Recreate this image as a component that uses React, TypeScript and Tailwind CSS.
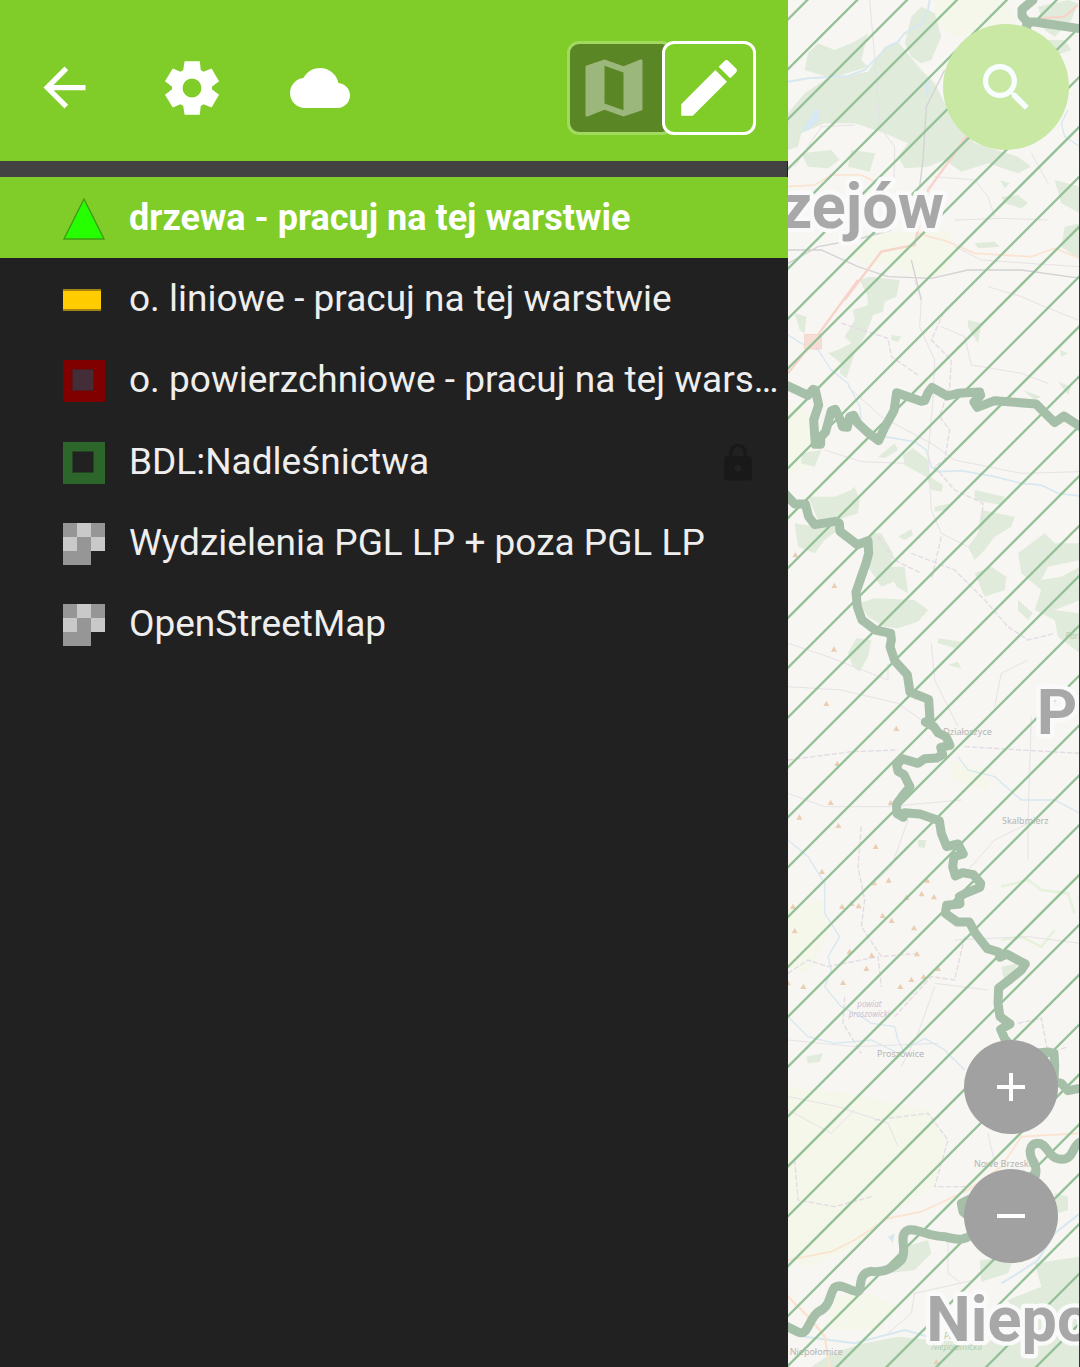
import type { ReactNode } from "react";
import {
  MdAdd,
  MdArrowBack,
  MdCloud,
  MdEdit,
  MdLock,
  MdMap,
  MdRemove,
  MdSearch,
} from "react-icons/md";

function GearIcon() {
  return (
    <svg viewBox="-80 -80 160 160" className="size-[54px]" fill="currentColor" aria-hidden="true">
      <path
        fillRule="evenodd"
        d="M-22-79H23L26-53 34-48 58-58 80-20 59-4V4L80 20 58 58 34 48 26 53 23 79H-22L-26 53-34 48-57 58-80 20-59 4V-4L-80-20-57-58-34-48-26-53ZM0-28A28 28 0 1 0 0 28A28 28 0 1 0 0-28Z"
      />
    </svg>
  );
}

function TriangleSymbol() {
  return (
    <svg viewBox="0 0 42 42" className="size-full" aria-hidden="true">
      <path d="M21 1L41 41H1Z" fill="#26ff00" stroke="#3f9a16" strokeWidth="1.3" />
    </svg>
  );
}

function LineSymbol() {
  return <span className="h-[22px] w-[38px] border-y-2 border-[#a38410] bg-[#ffcc00]" />;
}

function RedAreaSymbol() {
  return (
    <span className="size-full bg-[#800000] p-[9px]">
      <span className="block size-[22px] border border-[#54191e] bg-[#432d36]" />
    </span>
  );
}

function GreenAreaSymbol() {
  return (
    <span className="size-full bg-[#2d662b] p-[9px]">
      <span className="block size-[22px] border border-[#234323] bg-[#212121]" />
    </span>
  );
}

function RasterSymbol() {
  return (
    <span className="grid size-full grid-cols-3 grid-rows-3">
      <span className="bg-[#969696]" />
      <span className="bg-[#c9c9c9]" />
      <span className="bg-[#969696]" />
      <span className="bg-[#c9c9c9]" />
      <span className="bg-[#969696]" />
      <span className="bg-[#c9c9c9]" />
      <span className="bg-[#969696]" />
      <span className="bg-[#969696]" />
    </span>
  );
}

type Layer = { name: string; symbol: ReactNode; active?: boolean; locked?: boolean };

const layers: Layer[] = [
  { name: "drzewa - pracuj na tej warstwie", symbol: <TriangleSymbol />, active: true },
  { name: "o. liniowe - pracuj na tej warstwie", symbol: <LineSymbol /> },
  { name: "o. powierzchniowe - pracuj na tej warstwie", symbol: <RedAreaSymbol /> },
  { name: "BDL:Nadleśnictwa", symbol: <GreenAreaSymbol />, locked: true },
  { name: "Wydzielenia PGL LP + poza PGL LP", symbol: <RasterSymbol /> },
  { name: "OpenStreetMap", symbol: <RasterSymbol /> },
];

const hatch = Array.from({ length: 34 }, (_, i) => 58 + i * 149.6);

const peaks: [number, number][] = [
  [22, 1664], [139, 1756], [138, 1947], [115, 2110], [385, 2090], [325, 2185], [148, 2290], [308, 2408],
  [128, 2407], [34, 2451], [151, 2476], [263, 2539], [102, 2614], [302, 2640], [258, 2648], [417, 2640],
  [15, 2719], [162, 2719], [190, 2710], [212, 2717], [355, 2692], [401, 2681], [438, 2690], [284, 2746],
  [311, 2761], [20, 2792], [378, 2783], [185, 2854], [251, 2865], [387, 2861], [235, 2905], [450, 2905],
  [407, 2929], [370, 2938], [337, 2959], [165, 2947], [46, 2959], [0, 2948], [445, 4085],
];

function MapDrawing() {
  return (
    <svg
      viewBox="0 0 876 4101"
      preserveAspectRatio="xMinYMin slice"
      className="absolute inset-0 size-full"
      role="img"
      aria-label="Mapa"
    >
      <rect width="1800" height="4101" fill="#f7f6f2" />

      {/* meadows */}
      <g fill="#f4f7e9">
        <path d="M440 0H640L690 60 590 90 500 110 440 60ZM180 760L260 700 480 690 500 760 470 830 380 830 300 790 240 800ZM0 1210L60 1230 80 1300 60 1400 0 1420Z" />
        <path d="M0 2720L100 2700 120 2800 60 2920 0 2900ZM0 3260L180 3280 420 3330 480 3420 440 3560 300 3640 200 3740 60 3800 0 3780ZM480 2280L600 2310 600 2370 500 2340Z" />
        <path d="M120 3890L240 3880 330 3920 260 3990 130 3990Z" />
      </g>

      {/* forests */}
      <g fill="#e0ebdb">
        <path d="M60 160L90 130 140 150 200 125 240 100 220 180 240 200 130 235 50 210ZM370 50L400 20 440 40 460 110 430 180 400 190 370 170 350 130Z" />
        <path d="M110 240L240 215 290 140 330 125 400 210 440 250 480 330 560 430 690 470 730 500 690 520 600 490 520 515 470 480 420 500 350 505 330 470 360 430 290 400 200 370 110 370 40 400 30 440 0 450V340L50 280Z" />
        <path d="M190 450L262 460 245 515 180 500ZM40 460L130 450 155 480 120 505 60 500ZM750 20L840 0 870 10 850 60 800 110 770 90ZM750 120L830 120 850 150 790 170ZM800 540L876 560V640L820 610ZM830 680L876 670V780L820 740Z" />
        <path d="M560 730L620 725 635 740 570 745ZM635 540L665 550 650 565ZM640 590L690 585 720 610 700 625 650 610ZM215 840L245 830 330 840 320 890 240 890Z" />
        <path d="M235 840H335L325 890 290 905 285 935 255 945 235 1000 200 1060 175 1135 155 1120 160 1090 120 1060 150 1050 190 1030 170 1010 200 960 195 930 240 915ZM20 940L55 950 50 1000 35 990ZM540 960L580 970 570 1030 540 980ZM310 1005L340 1010 330 1025 310 1020Z" />
        <path d="M345 1365L375 1345 420 1380 425 1430 465 1455 460 1475 430 1470 415 1430 350 1395ZM270 1370L320 1330 330 1350 290 1375ZM40 1360L100 1350 80 1400 40 1390ZM60 1490L140 1490 190 1470 200 1460 215 1500 210 1540 150 1560 90 1560ZM20 1570L80 1580 140 1560 150 1590 110 1620 80 1660 30 1640Z" />
        <path d="M250 1600L280 1600 315 1660 310 1700 330 1740 280 1760 240 1700ZM330 1610L370 1588 375 1605 350 1620ZM560 1470L650 1490 640 1515 560 1500ZM440 1520L490 1510 480 1530 440 1535ZM580 1530L680 1550 670 1580 620 1610 590 1650 560 1680 540 1640 570 1600ZM690 1660L770 1600 800 1630 876 1630V1680L780 1700 760 1740 820 1730 876 1700V1800L800 1830 876 1840V1960L810 1910 800 1860 740 1830 760 1770 700 1720Z" />
        <path d="M215 1810L260 1795 380 1800 420 1830 390 1865 330 1885 290 1880 240 1850ZM180 1960L205 1915 250 1920 240 1970 215 2015 195 2000ZM560 1720L610 1700 655 1730 650 1770 590 1790ZM300 1700L350 1700 360 1780 325 1760ZM690 1800L735 1840 720 1860 690 1830ZM450 1915L520 1925 500 1945 450 1930ZM480 1995L510 1985 520 2005Z" />
        <path d="M390 2520H415L410 2545 390 2540ZM640 2900L690 2890 680 2920 650 2950ZM55 3170L105 3160 95 3185 60 3190ZM800 3580L840 3590 840 3630 810 3640ZM350 3740L420 3720 430 3760 380 3810 300 3820ZM575 3780L680 3770 660 3820 580 3845Z" />
        <path d="M740 3790L876 3770V4101H70L130 4060 230 4030 330 4010 430 4020 600 4030 680 3950 660 3900 760 3860ZM705 1170L760 1190 740 1200ZM810 1145L850 1160 840 1185ZM815 1050L840 1060 820 1070Z" />
      </g>
      <g fill="none" stroke="#e6f2dc" strokeWidth="8">
        <path d="M640 2660L720 2640 760 2670 840 2680 860 2740M640 2820L700 2810 760 2840 800 2790" />
      </g>

      {/* lakes and rivers */}
      <g fill="none" stroke="#d7e8f1" strokeWidth="4">
        <path d="M0 245L60 235 180 228 230 210 300 140 330 125 350 100 400 70 420 30 425 0" strokeWidth="6" />
        <path d="M0 1005L40 1030 90 1050 130 1110 180 1150 215 1220 220 1260" />
        <path d="M290 1310L380 1325 415 1350 430 1400 450 1415 520 1412 620 1430 700 1450 760 1455 810 1480 876 1488" strokeWidth="5" />
        <path d="M840 330L820 370 830 410 876 440M0 2520L60 2570 110 2650 110 2740 155 2810 120 2870 130 2910 110 2960 160 3020 220 3050 250 3070 320 3080 330 3120 345 3150" />
        <path d="M0 3050L60 3110 140 3130 250 3120 330 3160 410 3115 470 3150 530 3210M510 2270L540 2310 620 2330 700 2400 800 2400 876 2440" />
        <path d="M876 3640L800 3700 750 3780 690 3820 640 3850M50 4010L200 4030 350 3990 420 4010" strokeWidth="6" />
      </g>
      <path d="M78 330H96V360L60 390 40 395ZM300 3710L320 3700 315 3730ZM410 245H425L420 290H412Z" fill="#d7e8f1" />

      {/* borders and small roads */}
      <g fill="none" stroke="#e6e2e6" strokeWidth="3">
        <path d="M245 0L260 170 275 380 320 440 318 540M20 500L60 440 100 380 200 375M440 530L560 540 600 590 620 650M500 660L640 655 780 660M730 460L780 550M500 740L580 780 720 790 876 800" />
        <path d="M380 840L400 900 395 980 440 1080 435 1200 420 1360 430 1530 460 1600 540 1640M460 980L530 1010 550 1095 700 1120 780 1150M600 860L700 890 770 920 870 960M180 1160L280 1250 430 1330 500 1380 700 1420 876 1415M110 1350L220 1385 350 1390" />
        <path d="M0 1930L120 1970 300 2040V1990M0 2060L160 2070 330 2110 400 2160M430 1930L440 2040 510 2180M620 2120L640 2020 720 1980M730 2150L720 2460 720 2580M0 2380L110 2420 300 2420 520 2400" />
        <path d="M360 2460L310 2600 200 2700M440 2960L390 3100 340 3200M0 3120L200 3140 450 3130M440 2950L600 2970M540 2610L620 2520 720 2470M500 2820L720 2810 876 2830M0 3290L150 3320 300 3370 330 3440" />
        <path d="M300 4000L370 3940 380 3880 560 3840M0 3330L130 3400 200 3330M600 3400L620 3490M480 3720V3820L520 3850M876 3520L820 3570" />
      </g>
      <g fill="none" stroke="#e2dbe4" strokeWidth="4" strokeDasharray="16 6">
        <path d="M545 860L470 930 430 1020 490 1080 485 1160 455 1250 485 1290 470 1380 440 1400 500 1470 585 1510 580 1590M160 970L300 1015 310 1070 390 1125M270 1610L320 1680 400 1720M460 1610L430 1740" />
        <path d="M370 1660L500 1710 590 1800 660 1880 720 1920 800 1900M0 2280L190 2255 330 2250M530 2240L700 2250 876 2260M220 2480L210 2600 230 2700 220 2780 280 2870 390 2860M0 2920L60 2880 120 2900 270 2870 280 2960M530 2810L500 2940 430 2930 320 3050" />
        <path d="M170 2990L165 3070 220 3160M260 3360L420 3340 480 3420 440 3560 540 3560M20 3480L30 3600 140 3620 250 3590M690 3070L760 3055 780 3160 840 3140" />
      </g>
      <g fill="none" stroke="#d3d2d4" strokeWidth="4">
        <path d="M470 210L440 270 415 320 405 480 395 560M0 790L90 740 200 720 310 690M0 750L100 750 210 800 300 830 430 835 540 810 700 810 876 835M370 780L400 900" />
      </g>

      {/* main roads */}
      <g fill="none" stroke="#fbe3cf" strokeWidth="5">
        <path d="M0 560L80 555 130 525 220 525 260 545M390 700L480 725 560 760 730 770 800 745 876 775M0 3780L130 3755 200 3720 300 3655 400 3635 540 3570 640 3500 700 3410 876 3400" />
        <path d="M0 3890L70 3960 110 4010 125 4101" strokeWidth="7" />
      </g>
      <g fill="none" stroke="#f8d3ca" strokeWidth="7">
        <path d="M170 900L280 755 380 735 400 640 420 570 500 460 540 400M750 55L830 50 870 15M210 840L75 1025 0 1120" />
      </g>
      <rect x="50" y="1003" width="50" height="44" fill="#f6ddd4" stroke="#f3cfc5" strokeWidth="2" />

      {/* peaks */}
      <g fill="#ebcdb2">
        {peaks.map(([x, y]) => (
          <path key={`${x}-${y}`} d={`M${x} ${y - 8}l9 16h-18z`} />
        ))}
      </g>

      {/* small place names */}
      <g fontFamily='"Noto Sans", sans-serif' fontSize="27" fill="#b5b5b5">
        <text x="466" y="2204">Działoszyce</text>
        <text x="642" y="2471">Skalbmierz</text>
        <text x="267" y="3171">Proszowice</text>
        <text x="558" y="3502">Nowe Brzesko</text>
        <text x="5" y="4066">Niepołomice</text>
        <g fontStyle="italic" fill="#d0c0d2" fontSize="24">
          <text x="208" y="3021">powiat</text>
          <text x="182" y="3050">proszowicki</text>
        </g>
        <g fontStyle="italic" fill="#b3cdb0" fontSize="25">
          <text x="832" y="1918">Park</text>
          <text x="468" y="4016">Puszcza</text>
          <text x="430" y="4050">Niepołomicka</text>
        </g>
      </g>

      {/* forest district hatch */}
      <g stroke="#94c197" strokeWidth="7">
        {hatch.map((y) => (
          <line key={y} x1="-10" y1={y + 10} x2="1800" y2={y - 1800} />
        ))}
      </g>

      {/* forest district boundaries */}
      <g fill="none" stroke="#a6bfa8" strokeWidth="27" strokeLinejoin="round" strokeLinecap="round">
        <path d="M735 0L702 28 702 48 716 64 716 95M716 66L740 66 876 86" />
        <path d="M-10 1153L60 1186 75 1168 82 1170 92 1215 77 1260 82 1333 98 1333 98 1312 113 1295 130 1232 142 1228 158 1262 163 1280 178 1282 185 1250 197 1246 208 1268 240 1298 272 1322 290 1282 318 1232 326 1178 400 1204 410 1202 420 1178 432 1162 478 1188 510 1180 575 1176 578 1186 558 1206 568 1222 620 1202 744 1212 800 1268 828 1248 880 1282" />
        <path d="M-10 1480L20 1512 52 1512 62 1550 80 1574 142 1564 154 1570 156 1594 208 1634 240 1622 242 1660 234 1690 204 1776 208 1820 222 1860 262 1890 308 1900 310 1920 306 1940 320 1982 358 2024 366 2076 422 2098 426 2160 412 2166 438 2180 450 2198 474 2210 486 2236 458 2242 464 2264 446 2274 410 2276 390 2290 342 2276 326 2296 330 2314 348 2324 366 2360 342 2390 326 2412 326 2440 346 2452 350 2438 396 2442 454 2462 460 2500 476 2540 510 2532 526 2562 498 2570 494 2600 502 2628 524 2618 556 2624 578 2650 576 2662 532 2680 514 2690 516 2712 476 2716 472 2740 508 2766 544 2766 562 2800 598 2846 632 2856 636 2872 656 2862 712 2892 700 2910 666 2938 632 2964 630 3010 636 3050 666 3072 638 3088 650 3116 690 3160" />
        <path d="M740 3160L780 3156 798 3160 800 3195 798 3245 820 3250 840 3272 880 3264M890 3424C850 3424 862 3478 822 3478C780 3478 780 3430 750 3430C720 3430 722 3465 738 3488C750 3510 742 3540 720 3570" />
        <path d="M560 3590L520 3610 525 3635 580 3680C530 3730 510 3720 470 3710C420 3710 380 3680 356 3692C330 3710 360 3750 340 3780C320 3800 290 3820 250 3814C200 3820 230 3880 204 3874C180 3870 160 3850 140 3862C124 3880 130 3920 90 3936C60 3960 60 4010 30 3996L-10 3976" />
      </g>

      {/* district names */}
      <g
        fontFamily="Roboto, sans-serif"
        fontWeight="700"
        fontSize="189"
        fill="#a8a8a8"
        stroke="#fafafa"
        strokeWidth="26"
        strokeLinejoin="round"
        paintOrder="stroke"
      >
        <text x="468" y="685" textAnchor="end">zejów</text>
        <text x="746" y="2202">P</text>
        <text x="415" y="4023">Niepo</text>
      </g>
    </svg>
  );
}

export default function App() {
  return (
    <div className="flex min-h-screen bg-[#212121] font-[Roboto,sans-serif]">
      <aside className="flex w-[73%] shrink-0 flex-col bg-[#212121]">
        <header className="flex h-[161px] items-center justify-between bg-[#80cd29] pt-[14px] pr-8 pl-8 text-white">
          <nav className="flex items-center gap-16">
            <button type="button" aria-label="Wstecz" className="flex size-16 items-center justify-center">
              <MdArrowBack className="size-[63px]" />
            </button>
            <button type="button" aria-label="Ustawienia" className="flex size-16 items-center justify-center">
              <GearIcon />
            </button>
            <button type="button" aria-label="Chmura" className="flex size-16 items-center justify-center">
              <MdCloud className="size-[60px]" />
            </button>
          </nav>
          <div className="flex">
            <button
              type="button"
              aria-label="Tryb mapy"
              className="-mr-3 flex h-[94px] w-[107px] items-center rounded-xl border-[3px] border-[#a1da5f] bg-[#5b8625] pl-[6px] text-[#9cb77c]"
            >
              <MdMap className="size-[76px]" />
            </button>
            <button
              type="button"
              aria-label="Tryb edycji"
              aria-pressed="true"
              className="flex size-[94px] items-center justify-center rounded-xl border-[3px] border-white bg-[#80cd29]"
            >
              <MdEdit className="size-[74px]" />
            </button>
          </div>
        </header>
        <div className="mr-px h-4 bg-[#424242]" />
        <ul className="grid h-[488px] auto-rows-fr grid-cols-1">
          {layers.map((layer) => (
            <li key={layer.name} className={layer.active ? "bg-[#80cd29]" : ""}>
              <button
                type="button"
                className="flex size-full items-center gap-6 pr-1 pl-[63px] text-left"
              >
                <span className="mt-[2px] flex size-[42px] shrink-0 items-center">{layer.symbol}</span>
                <span
                  className={
                    layer.active
                      ? "min-w-0 flex-1 truncate text-[36px] leading-[48px] font-bold text-white"
                      : "min-w-0 flex-1 truncate text-[37px] leading-[48px] text-[#eeeeee]"
                  }
                >
                  {layer.name}
                </span>
                {layer.locked && <MdLock className="mt-[2px] mr-[25px] size-[42px] text-[#191919]" />}
              </button>
            </li>
          ))}
        </ul>
      </aside>

      <main className="relative flex flex-1 flex-col items-end justify-between overflow-hidden border-r border-[#333333] bg-[#f7f6f2]">
        <MapDrawing />
        <button
          type="button"
          aria-label="Szukaj"
          className="relative mt-6 mr-[10px] flex size-[126px] items-center justify-center rounded-full bg-[#c8e8a4] text-[#f8fdff]"
        >
          <MdSearch className="size-[63px]" />
        </button>
        <div className="relative mr-[21px] mb-[104px] flex flex-col gap-[35px]">
          <button
            type="button"
            aria-label="Powiększ"
            className="flex size-[94px] items-center justify-center rounded-full bg-[#a1a1a1] text-white"
          >
            <MdAdd className="size-12" />
          </button>
          <button
            type="button"
            aria-label="Pomniejsz"
            className="flex size-[94px] items-center justify-center rounded-full bg-[#a1a1a1] text-white"
          >
            <MdRemove className="size-12" />
          </button>
        </div>
      </main>
    </div>
  );
}
